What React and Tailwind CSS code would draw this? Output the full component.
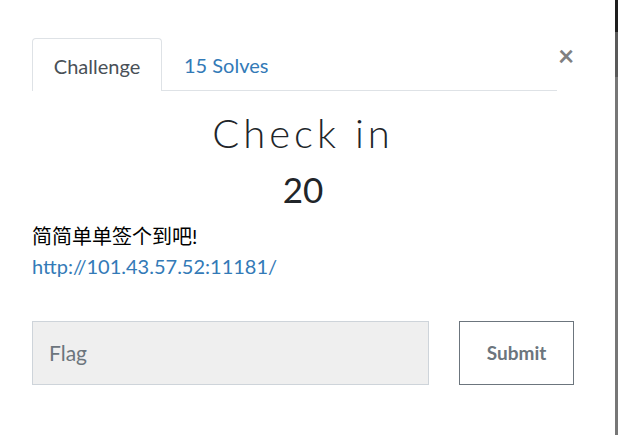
export default function App() {
  return (
    <div className="flex w-[618px] h-[435px] bg-white overflow-hidden" style={{ fontFamily: "Lato, 'Noto Sans CJK SC', sans-serif" }}>
      {/* Modal body */}
      <div className="flex-1 pl-[32px] pr-[41px] pt-[38px]">
        <div className="flex items-start">
          <ul className="flex flex-1 border-b border-[#dee2e6] h-[53px]">
            <li className="w-[130px] h-[53px] border border-b-0 border-[#dee2e6] rounded-t-[4px] bg-white flex items-center justify-center pt-[1px] text-[20px] text-[#495057]">
              Challenge
            </li>
            <li className="px-[22px] h-[53px] flex items-center pt-[1px] text-[20px] text-[#337ab7]">15 Solves</li>
          </ul>
          <button className="w-[16px] ml-[1px] mt-[3px] text-[28px] leading-none font-bold text-[#808080]">×</button>
        </div>

        <h3 className="text-center text-[40px] leading-none mt-[22px] tracking-[4px] font-light text-[#212529]">Check in</h3>
        <h4 className="text-center text-[35px] leading-none mt-[19px] text-[#212529]">20</h4>

        <p className="mt-[14px] text-[20px] leading-[30px] text-black">简简单单签个到吧!</p>
        <a className="block text-[20px] leading-[30px] text-[#337ab7]">http://101.43.57.52:11181/</a>

        <div className="flex mt-[40px] gap-[30px]">
          <div className="flex-1 h-[64px] bg-[#efefef] border border-[#ced4da] flex items-center px-[16px] text-[21px] text-[#6c757d]">
            Flag
          </div>
          <button className="w-[115px] h-[64px] border border-[#6c757d] bg-white text-[19px] font-bold text-[#6c757d]">Submit</button>
        </div>
      </div>
      {/* backdrop strip */}
      <div className="w-[3px] flex flex-col">
        <div className="h-[32px] bg-[#1e1e1e]" />
        <div className="h-[45px] bg-[#5a5a5a]" />
        <div className="flex-1 bg-[#777777]" />
      </div>
    </div>
  );
}
